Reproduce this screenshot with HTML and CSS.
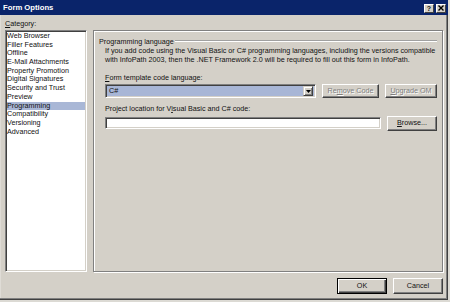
FILE: index.html
```html
<!DOCTYPE html>
<html>
<head>
<meta charset="utf-8">
<link rel="stylesheet" href="styles.css">
</head>
<body>
<div class="window">
  <div class="titlebar">
    <span class="title">Form Options</span>
    <div class="tb-buttons">
      <span class="tbtn tbtn-help">?</span>
      <span class="tbtn"><svg width="6" height="6" viewBox="0 0 6 6"><path d="M0.5 0.5 L5.5 5.5 M5.5 0.5 L0.5 5.5" stroke="#000" stroke-width="1.4"/></svg></span>
    </div>
  </div>
  <div class="content">
    <div class="main">
      <div class="cat-col">
        <div class="label cat-label"><u>C</u>ategory:</div>
        <ul class="list">
          <li>Web Browser</li>
          <li>Filler Features</li>
          <li>Offline</li>
          <li>E-Mail Attachments</li>
          <li>Property Promotion</li>
          <li>Digital Signatures</li>
          <li>Security and Trust</li>
          <li>Preview</li>
          <li class="selected">Programming</li>
          <li>Compatibility</li>
          <li>Versioning</li>
          <li>Advanced</li>
        </ul>
      </div>
      <div class="panel">
        <div class="group-head"><span class="group-title">Programming language</span><span class="rule"></span></div>
        <div class="group-body">
          <p class="desc"><span class="line">If you add code using the Visual Basic or C# programming languages, including the versions compatible</span><span class="line">with InfoPath 2003, then the .NET Framework 2.0 will be required to fill out this form in InfoPath.</span></p>
          <div class="label field-label"><u>F</u>orm template code language:</div>
          <div class="row">
            <div class="combo">
              <span class="combo-val">C#</span>
              <span class="combo-btn"><svg width="5" height="3" viewBox="0 0 5 3"><path d="M0 0 H5 L2.5 3 Z" fill="#000"/></svg></span>
            </div>
            <span class="btn disabled btn-remove">Re<u>m</u>ove Code</span>
            <span class="btn disabled btn-upgrade"><u>U</u>pgrade OM</span>
          </div>
          <div class="label field-label second">Project location for V<u>i</u>sual Basic and C# code:</div>
          <div class="row row-top">
            <div class="textbox"></div>
            <span class="btn btn-browse"><u>B</u>rowse...</span>
          </div>
        </div>
      </div>
    </div>
    <div class="footer">
      <span class="btn btn-default">OK</span>
      <span class="btn">Cancel</span>
    </div>
  </div>
</div>
</body>
</html>
```

FILE: styles.css
```css
html, body {
  margin: 0;
  padding: 0;
  background: #dcdad4;
}
body {
  width: 450px;
  height: 302px;
  overflow: hidden;
  font-family: "Liberation Sans", Arial, sans-serif;
  font-size: 7.2px;
  color: #111;
}
.window {
  width: 448px;
  height: 300px;
  box-sizing: border-box;
  background: #d4d0c8;
  box-shadow: inset -1px -1px 0 #404040, inset -2px -2px 0 #808080, inset 1px 1px 0 #dfdcd6;
  display: flex;
  flex-direction: column;
}
.titlebar {
  height: 15px;
  background: #0a246a;
  display: flex;
  align-items: center;
  justify-content: space-between;
  padding: 0 2px 0 3px;
  flex: none;
}
.title {
  color: #fff;
  font-weight: bold;
  font-size: 7.7px;
  line-height: 15px;
}
.tb-buttons {
  display: flex;
  gap: 2px;
  margin-top: 1px;
}
.tbtn {
  width: 10px;
  height: 9px;
  box-sizing: border-box;
  background: #d4d0c8;
  border: 1px solid;
  border-color: #fff #404040 #404040 #fff;
  display: flex;
  align-items: center;
  justify-content: center;
  font-weight: bold;
  font-size: 7px;
  line-height: 7px;
}
.content {
  flex: 1;
  display: flex;
  flex-direction: column;
  padding: 3px 5px 0 5px;
}
.main {
  display: flex;
  gap: 6px;
  height: 254px;
}
.cat-col {
  width: 82px;
  display: flex;
  flex-direction: column;
}
.label {
  line-height: 8.5px;
  white-space: nowrap;
}
.cat-label {
  height: 12px;
  line-height: 11px;
}
.list {
  margin: 0;
  padding: 0;
  list-style: none;
  flex: 1;
  background: #fff;
  border: 1px solid;
  border-color: #808080 #fff #fff #808080;
  box-shadow: inset 1px 1px 0 #404040, inset -1px -1px 0 #d4d0c8;
  padding: 1px 1px;
}
.list li {
  height: 8.7px;
  line-height: 8.7px;
  padding-left: 0px;
  white-space: nowrap;
}
.list li.selected {
  background: #a9b7d6;
}
.panel {
  flex: 1;
  margin-top: 12px;
  border: 1px solid #808080;
  box-shadow: inset 1px 1px 0 #fff, 1px 1px 0 #fff;
  padding: 5px 5px 0 5px;
}
.group-head {
  display: flex;
  align-items: center;
  height: 10px;
  gap: 1px;
}
.group-title {
  white-space: nowrap;
}
.rule {
  flex: 1;
  height: 0;
  border-top: 1px solid #a0a0a0;
  border-bottom: 1px solid #fff;
}
.group-body {
  padding-left: 6px;
}
.desc {
  margin: 1px 0 0 0;
  line-height: 8.5px;
}
.desc .line {
  display: block;
  white-space: nowrap;
}
.field-label {
  margin-top: 10px;
}
.field-label.second {
  margin-top: 7px;
}
.row {
  display: flex;
  gap: 6px;
  margin-top: 1.5px;
  align-items: center;
}
.row-top {
  align-items: flex-start;
  margin-top: 2px;
}
.combo {
  width: 211px;
  height: 13.5px;
  box-sizing: border-box;
  border: 1px solid;
  border-color: #808080 #fff #fff #808080;
  box-shadow: inset 1px 1px 0 #404040, inset -1px -1px 0 #d4d0c8;
  background: #a8b6d6;
  display: flex;
  align-items: center;
  justify-content: space-between;
  padding: 2px 2px 2px 2px;
}
.combo-val {
  padding-left: 1px;
  line-height: 8px;
}
.combo-btn {
  width: 10px;
  height: 9.5px;
  box-sizing: border-box;
  background: #d4d0c8;
  border: 1px solid;
  border-color: #d4d0c8 #404040 #404040 #d4d0c8;
  box-shadow: inset 1px 1px 0 #fff, inset -1px -1px 0 #808080;
  display: flex;
  align-items: center;
  justify-content: center;
}
.btn {
  display: flex;
  align-items: center;
  justify-content: center;
  box-sizing: border-box;
  height: 14px;
  background: #d4d0c8;
  border: 1px solid;
  border-color: #fff #404040 #404040 #fff;
  box-shadow: inset -1px -1px 0 #808080;
  white-space: nowrap;
  line-height: 8px;
}
.btn.disabled {
  color: #808080;
  text-shadow: 1px 1px 0 #fff;
}
.btn-remove { width: 57px; }
.btn-upgrade { width: 52px; }
.textbox {
  width: 276px;
  height: 12px;
  box-sizing: border-box;
  margin-top: 1px;
  background: #fff;
  border: 1px solid;
  border-color: #808080 #fff #fff #808080;
  box-shadow: inset 1px 1px 0 #404040, inset -1px -1px 0 #d4d0c8;
}
.btn-browse {
  width: 50px;
  height: 15px;
}
.footer {
  display: flex;
  justify-content: flex-end;
  gap: 6px;
  margin-top: 6px;
}
.footer .btn {
  width: 50px;
  height: 16px;
}
.btn-default {
  border: 1px solid #000;
  box-shadow: inset 1px 1px 0 #fff, inset -1px -1px 0 #404040, inset -2px -2px 0 #808080;
}
```
